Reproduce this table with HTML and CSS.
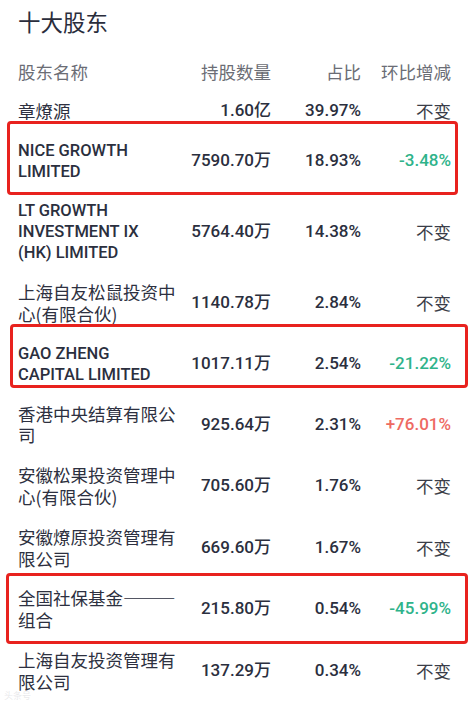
FILE: index.html
```html
<!DOCTYPE html>
<html lang="zh">
<head>
<meta charset="utf-8">
<link rel="stylesheet" href="styles.css">
</head>
<body>
<div class="page">
  <h1 class="title">十大股东</h1>
  <div class="table">
    <div class="row head">
      <div class="name">股东名称</div>
      <div class="num">持股数量</div>
      <div class="num">占比</div>
      <div class="num">环比增减</div>
    </div>
    <div class="row">
      <div class="name">章燎源</div>
      <div class="num val">1.60亿</div>
      <div class="num val">39.97%</div>
      <div class="num same">不变</div>
    </div>
    <div class="row">
      <div class="name en">NICE GROWTH LIMITED</div>
      <div class="num val">7590.70万</div>
      <div class="num val">18.93%</div>
      <div class="num val down">-3.48%</div>
    </div>
    <div class="row">
      <div class="name en">LT GROWTH INVESTMENT IX (HK) LIMITED</div>
      <div class="num val">5764.40万</div>
      <div class="num val">14.38%</div>
      <div class="num same">不变</div>
    </div>
    <div class="row">
      <div class="name">上海自友松鼠投资中心(有限合伙)</div>
      <div class="num val">1140.78万</div>
      <div class="num val">2.84%</div>
      <div class="num same">不变</div>
    </div>
    <div class="row">
      <div class="name en">GAO ZHENG CAPITAL LIMITED</div>
      <div class="num val">1017.11万</div>
      <div class="num val">2.54%</div>
      <div class="num val down">-21.22%</div>
    </div>
    <div class="row">
      <div class="name">香港中央结算有限公司</div>
      <div class="num val">925.64万</div>
      <div class="num val">2.31%</div>
      <div class="num val up">+76.01%</div>
    </div>
    <div class="row">
      <div class="name">安徽松果投资管理中心(有限合伙)</div>
      <div class="num val">705.60万</div>
      <div class="num val">1.76%</div>
      <div class="num same">不变</div>
    </div>
    <div class="row">
      <div class="name">安徽燎原投资管理有限公司</div>
      <div class="num val">669.60万</div>
      <div class="num val">1.67%</div>
      <div class="num same">不变</div>
    </div>
    <div class="row">
      <div class="name">全国社保基金———组合</div>
      <div class="num val">215.80万</div>
      <div class="num val">0.54%</div>
      <div class="num val down">-45.99%</div>
    </div>
    <div class="row">
      <div class="name">上海自友投资管理有限公司</div>
      <div class="num val">137.29万</div>
      <div class="num val">0.34%</div>
      <div class="num same">不变</div>
    </div>
  </div>
  <div class="mark mark1"></div>
  <div class="mark mark2"></div>
  <div class="mark mark3"></div>
  <div class="watermark">头条号</div>
</div>
</body>
</html>
```

FILE: styles.css
```css
* { box-sizing: border-box; }
html, body { margin: 0; padding: 0; background: #fff; }
body {
  font-family: "Noto Sans CJK SC", "Noto Sans", sans-serif;
  color: #2d3040;
  width: 469px;
  height: 701px;
  overflow: hidden;
}
.page {
  position: relative;
  padding: 6px 18px 0 18px;
}
.title {
  margin: 0;
  font-size: 22.5px;
  font-weight: 400;
  line-height: 30px;
  color: #2a2d3c;
}
.table {
  margin-top: 15.5px;
}
.row {
  display: grid;
  grid-template-columns: 160px 93px 90px 90px;
  align-items: center;
  padding: 9px 0;
}
.name {
  min-width: 0;
  max-width: 159px;
  font-size: 17.5px;
  line-height: 21.8px;
  color: #2d3040;
  word-break: break-all;
}
.name.en {
  max-width: 150px;
  font-family: "Roboto", "Noto Sans", sans-serif;
  font-weight: 500;
  font-size: 16.5px;
  line-height: 21px;
  word-break: normal;
  color: #2b2f3e;
}
.num {
  text-align: right;
  font-size: 17.5px;
  line-height: 21.8px;
  white-space: nowrap;
}
.head .name, .head .num {
  color: #6b6d75;
}
.val {
  font-family: "Roboto", "Noto Sans CJK SC", sans-serif;
  font-weight: 500;
  font-size: 17px;
  color: #2b2f3e;
}
.same { color: #3a3d48; }
.down { color: #2fb38a; }
.up { color: #ee6a62; }
.mark {
  position: absolute;
  border: 3px solid #e8221e;
  border-radius: 4px;
}
.mark1 { left: 7px; top: 121px; width: 451px; height: 74px; }
.mark2 { left: 10px; top: 324px; width: 458px; height: 64px; }
.mark3 { left: 6px; top: 573px; width: 462px; height: 71px; }
.watermark {
  position: absolute;
  left: 4px;
  top: 690px;
  font-size: 9px;
  line-height: 11px;
  color: rgba(200, 200, 205, 0.4);
}
```
